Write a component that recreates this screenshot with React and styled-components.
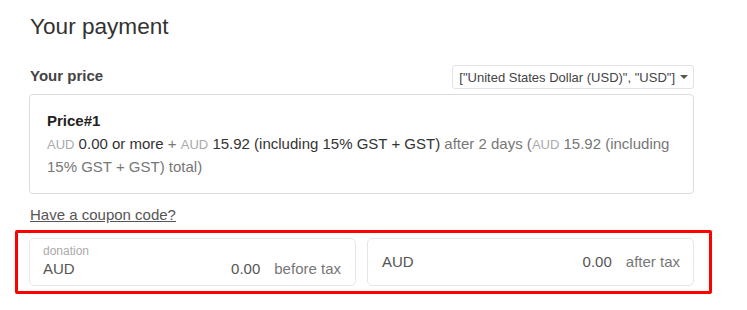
import React from 'react';
import styled, { createGlobalStyle } from 'styled-components';

const GlobalStyle = createGlobalStyle`
  body {
    margin: 0;
    background: #fff;
    font-family: "Liberation Sans", Arial, sans-serif;
    color: #333;
  }
`;

const Page = styled.div`
  width: 665px;
  padding: 12px 0 0 29px;
`;

const Title = styled.h2`
  margin: 0 0 23px 1px;
  font-size: 22.6px;
  font-weight: normal;
  line-height: 30px;
  color: #333;
`;

const PriceHeader = styled.div`
  display: flex;
  justify-content: space-between;
  align-items: flex-end;
  margin-bottom: 5px;
`;

const Label = styled.div`
  margin-left: 1px;
  padding-bottom: 5px;
  font-size: 15px;
  font-weight: bold;
  color: #444;
`;

const Select = styled.div`
  display: flex;
  align-items: center;
  gap: 5px;
  height: 24px;
  padding: 0 5px 0 6px;
  border: 1px solid #e3e3e3;
  border-radius: 3px;
  font-size: 13px;
  color: #444;
  box-sizing: border-box;
`;

const Caret = styled.span`
  width: 0;
  height: 0;
  border-left: 4px solid transparent;
  border-right: 4px solid transparent;
  border-top: 4px solid #555;
`;

const Card = styled.div`
  padding: 15px 16px 15px 17px;
  border: 1px solid #dcdcdc;
  border-radius: 4px;
  font-size: 15px;
  line-height: 22px;
  color: #333;
`;

const CardTitle = styled.div`
  margin-bottom: 1px;
  font-weight: bold;
  color: #222;
`;

const Muted = styled.span`
  color: ${(p) => (p.$light ? '#aaa' : '#777')};
  font-size: ${(p) => (p.$small ? '13px' : 'inherit')};
`;

const Coupon = styled.a`
  display: inline-block;
  margin: 12px 0 0 1px;
  font-size: 15px;
  color: #555;
  text-decoration: underline;
`;

const Highlight = styled.div`
  display: grid;
  grid-template-columns: 1fr 1fr;
  gap: 11px;
  margin: 6px -18px 0 -14px;
  padding: 5px 15px 5px 11px;
  border: 3px solid #f00;
  border-radius: 2px;
`;

const Field = styled.div`
  display: flex;
  flex-direction: column;
  justify-content: ${(p) => (p.$labelled ? 'flex-start' : 'center')};
  height: 48px;
  padding: ${(p) => (p.$labelled ? '5px 14px 0 13px' : '0 13px 0 14px')};
  border: 1px solid #e6e6e6;
  border-radius: 5px;
  box-sizing: border-box;
`;

const FieldLabel = styled.div`
  font-size: 12px;
  line-height: 14px;
  color: #aaa;
`;

const FieldRow = styled.div`
  display: flex;
  align-items: baseline;
  font-size: 15px;
  line-height: 22px;
  color: #555;
`;

const Currency = styled.span`
  flex: 1;
`;

const Amount = styled.span`
  color: #555;
`;

const Suffix = styled.span`
  margin-left: 14px;
  color: #777;
`;

export default function App() {
  return (
    <>
      <GlobalStyle />
      <Page>
        <Title>Your payment</Title>
        <PriceHeader>
          <Label>Your price</Label>
          <Select>
            ["United States Dollar (USD)", "USD"]
            <Caret />
          </Select>
        </PriceHeader>
        <Card>
          <CardTitle>Price#1</CardTitle>
          <div>
            <Muted $light $small>AUD</Muted> 0.00 or more <Muted>+</Muted>{' '}
            <Muted $light $small>AUD</Muted> 15.92 (including 15% GST + GST){' '}
            <Muted>after 2 days (</Muted>
            <Muted $light $small>AUD</Muted>
            <Muted> 15.92 (including 15% GST + GST) total)</Muted>
          </div>
        </Card>
        <Coupon>Have a coupon code?</Coupon>
        <Highlight>
          <Field $labelled>
            <FieldLabel>donation</FieldLabel>
            <FieldRow>
              <Currency>AUD</Currency>
              <Amount>0.00</Amount>
              <Suffix>before tax</Suffix>
            </FieldRow>
          </Field>
          <Field>
            <FieldRow>
              <Currency>AUD</Currency>
              <Amount>0.00</Amount>
              <Suffix>after tax</Suffix>
            </FieldRow>
          </Field>
        </Highlight>
      </Page>
    </>
  );
}
